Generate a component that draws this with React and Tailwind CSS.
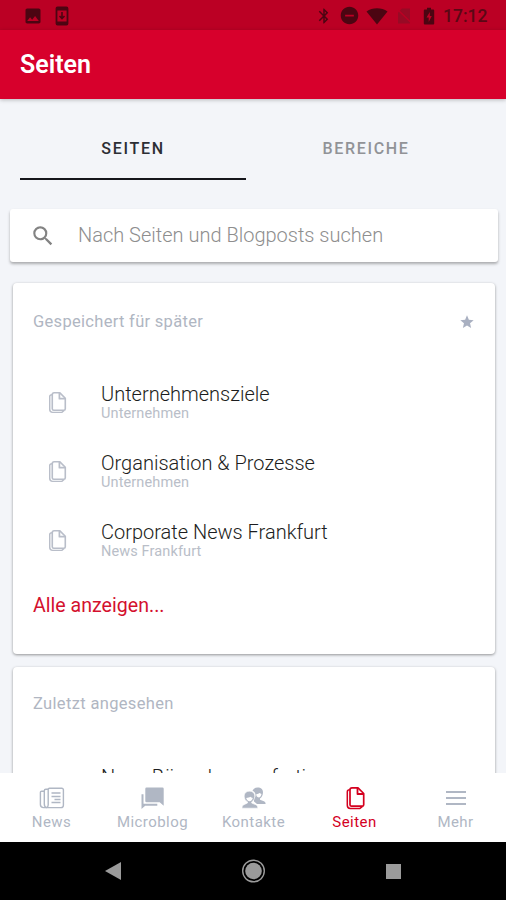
import React, { useState } from 'react';
import { MdBluetooth, MdRemoveCircle, MdImage, MdSearch, MdStar } from 'react-icons/md';

const savedPages = [
  { title: 'Unternehmensziele', space: 'Unternehmen' },
  { title: 'Organisation & Prozesse', space: 'Unternehmen' },
  { title: 'Corporate News Frankfurt', space: 'News Frankfurt' },
];

const PagesIcon = ({ className }) => (
  <svg viewBox="0 0 20 24" className={className} fill="none" stroke="currentColor" strokeLinejoin="round">
    <path d="M6.500 1.800h6l5.700 5.700v11.200a1.500 1.500 0 0 1-1.500 1.500H6a1.500 1.500 0 0 1-1.500-1.500V3.800a2 2 0 0 1 2-2z" strokeWidth="1.700" />
    <path d="M12 2v6h6" strokeWidth="1.800" />
    <path d="M4.300 3.800c-1.500 0-2.500.8-2.500 2v13.400c0 2 1 3.200 3 3.200h9.700l2.500-2" strokeWidth="1.500" />
  </svg>
);

const NewsIcon = () => (
  <svg viewBox="0 0 26 22" className="w-[26px] h-[22px]" fill="none" stroke="currentColor" strokeWidth="1.400">
    <path d="M10.500 1.200h12.300a1.600 1.600 0 0 1 1.600 1.600v15.400a2.400 2.400 0 0 1-2.400 2.400H7.500c1.200-.5 1.700-1.300 1.700-2.600V2.500c0-.8.500-1.300 1.300-1.300z" />
    <path d="M9 2.300H6.800c-1 0-1.500.5-1.500 1.500V17c0 2 .8 3.200 2.200 3.600" />
    <path d="M5.300 4.200H2.800c-.9 0-1.400.5-1.400 1.400v11.900c0 2 1.300 3.100 3.200 3.100H8" />
    <path d="M12.500 6h9M12.500 9.500h9M15.500 12.500h6M12.500 15.500h9" />
  </svg>
);

const ChatIcon = () => (
  <svg viewBox="0 0 24 22" className="w-6 h-[22px]" fill="currentColor">
    <path d="M5.500.5h16a1.200 1.200 0 0 1 1.200 1.200v17l-4-3.400H5.500a1.200 1.200 0 0 1-1.200-1.200V1.700A1.200 1.200 0 0 1 5.500.5z" />
    <path d="M.5 7.200h2v9.500h13.800v2H4.200L.5 22z" />
  </svg>
);

const ContactsIcon = () => (
  <svg viewBox="0 0 24 22" className="w-6 h-[22px]" fill="currentColor">
    {/* person at the back */}
    <path d="M10.500 3.800C11.500 1.700 13.200.6 15.700.6c3.300 0 5.300 1.900 5.300 4.700 0 3-1.300 5.200-3 6.100v1.300l3.900 1.500c1.200.5 1.700 1.400 1.700 2.800H15l-3-2.500v-3c1-1 1.500-2.100 1.500-3.500 0-1.900-1-3.400-3-4.200z" />
    <path d="M14.200 7.300c1.600-.2 2.800-.7 3.400-1.200.5.500 1.200.8 1.900.9-.3 1.900-1.400 3.400-2.700 3.400-.9 0-1.700-.5-2.300-1.400z" fill="white" />
    {/* person in front */}
    <path d="M2.200 9.200c0-3 1.900-5 5.300-5s5.300 2 5.300 5c0 2.600-1.400 4.700-3.100 5.700v1.200l4.100 1.600c1.400.6 2 1.600 2 3.500H0c0-1.900.5-2.900 1.900-3.500L5.500 16v-1.200c-1.900-1-3.300-3-3.300-5.600z" stroke="white" strokeWidth=".6" />
    <path d="M4.200 10.900c1.800-.1 3.300-.5 4.100-1.200.6.600 1.500 1 2.500 1.200-.4 1.900-1.700 3.300-3.200 3.300-1.600 0-3-1.400-3.400-3.300z" fill="white" />
  </svg>
);

const MenuIcon = () => (
  <svg viewBox="0 0 22 22" className="w-[22px] h-[22px]" stroke="currentColor" strokeWidth="2">
    <path d="M1 5h20M1 11h20M1 17h20" />
  </svg>
);

const navItems = [
  { label: 'News', icon: <NewsIcon /> },
  { label: 'Microblog', icon: <ChatIcon /> },
  { label: 'Kontakte', icon: <ContactsIcon /> },
  { label: 'Seiten', icon: <PagesIcon className="w-[21px] h-6" /> },
  { label: 'Mehr', icon: <MenuIcon /> },
];

const StatusBar = () => (
  <div className="h-[30px] shrink-0 bg-[#bb0024] text-[#4c0512] flex items-center justify-between pl-[23px] pr-[18px] pt-px">
    <div className="flex items-center gap-[11px]">
      <MdImage className="w-5 h-5" />
      <svg viewBox="0 0 16 20" className="w-4 h-5" fill="none" stroke="currentColor">
        <rect x="2.5" y="1.5" width="11" height="17" rx="1" strokeWidth="1.8" />
        <path d="M2 3h12M2 17h12" strokeWidth="3" />
        <path d="M8 6v6M5.5 10L8 12.5l2.5-2.5" strokeWidth="1.6" />
      </svg>
    </div>
    <div className="flex items-center">
      <MdBluetooth className="w-[18px] h-5" />
      <MdRemoveCircle className="w-[21px] h-[21px] ml-[6px]" />
      <svg viewBox="0 0 22 18" className="w-[22px] h-[18px] ml-[6px]" fill="currentColor">
        <path d="M.5 4.500C6.500.2 15.500.2 21.500 4.500L11 17.500z" />
      </svg>
      <svg viewBox="0 0 14 16" className="w-[14px] h-4 ml-[9px] text-[#980a25]">
        <path d="M5 .5h8v15H1v-11z" fill="currentColor" />
        <path d="M1 2l12.500 12" stroke="#bb0024" strokeWidth="1.500" />
      </svg>
      <svg viewBox="0 0 12 18" className="w-3 h-[18px] ml-[12px]">
        <path d="M4 .8h4v1.700h2.200a1 1 0 0 1 1 1v13a1 1 0 0 1-1 1H1.800a1 1 0 0 1-1-1v-13a1 1 0 0 1 1-1H4z" fill="currentColor" />
        <path d="M6.800 5L3.500 10.500h2.200V15L8.800 9H6.800z" fill="#bb0024" />
      </svg>
      <span className="ml-[8px] mt-[2px] w-[45px] text-[17.5px] leading-none font-medium whitespace-nowrap text-[#5a0815]">17:12</span>
    </div>
  </div>
);

const App = () => {
  const [activeTab, setActiveTab] = useState('SEITEN');
  const [activeNav, setActiveNav] = useState('Seiten');

  return (
    <div className="w-full h-screen flex flex-col overflow-hidden bg-[#f3f5f9] font-[Roboto,sans-serif]">
      <StatusBar />

      {/* Header */}
      <header className="h-[69px] shrink-0 bg-[#d7002c] flex items-center px-5 shadow-[0_1px_4px_rgba(0,0,0,0.25)]">
        <h1 className="text-white text-[25px] leading-none font-semibold">Seiten</h1>
      </header>

      {/* Tabs */}
      <div className="flex pl-5 h-[81px] shrink-0">
        {['SEITEN', 'BEREICHE'].map((tab) => (
          <button
            key={tab}
            type="button"
            onClick={() => setActiveTab(tab)}
            className={`w-[226px] shrink-0 border-b-2 pt-[21px] text-base font-medium tracking-[1.7px] ${
              activeTab === tab ? 'border-[#15161b] text-[#2c2e34]' : 'border-transparent text-[#919397] ml-[7px]'
            }`}
          >
            {tab}
          </button>
        ))}
      </div>

      <main className="flex-1 min-h-0 overflow-hidden pt-[29px]">
        {/* Search */}
        <div className="mr-2 ml-[10px] h-[53px] bg-white rounded-[3px] flex items-center pl-5 shadow-[0_2px_3px_rgba(0,0,0,0.3)]">
          <MdSearch className="w-[26px] h-[26px] text-[#838383]" />
          <span className="ml-[22px] mb-px text-[20px] leading-6 font-light text-[#8e8e8e]">Nach Seiten und Blogposts suchen</span>
        </div>

        {/* Saved pages */}
        <section className="mt-[21px] mr-[11px] ml-[13px] h-[371px] bg-white rounded-[4px] px-5 shadow-[0_1px_3px_rgba(0,0,0,0.4)]">
          <div className="h-[77px] flex items-center justify-between">
            <h2 className="pt-px text-[16.5px] tracking-[0.3px] text-[#b0b6c2]">Gespeichert für später</h2>
            <MdStar className="w-4 h-4 text-[#a9b0c1]" />
          </div>
          <ul className="pt-[9px]">
            {savedPages.map((page) => (
              <li key={page.title} className="h-[69px] flex items-center">
                <PagesIcon className="w-[19px] h-[23px] ml-[15px] mb-[2px] text-[#b9bec9]" />
                <div className="ml-[34px] mb-px">
                  <div className="text-[20px] leading-[22px] font-light text-[#1c1d20]">{page.title}</div>
                  <div className="text-[14.5px] leading-[18px] tracking-[0.12px] text-[#b9bec8]">{page.space}</div>
                </div>
              </li>
            ))}
          </ul>
          <button type="button" className="mt-[18px] text-[19.6px] leading-6 text-[#d4102e]">Alle anzeigen...</button>
        </section>

        {/* Recently viewed */}
        <section className="mt-[13px] mr-[11px] ml-[13px] h-[371px] bg-white rounded-[4px] px-5 shadow-[0_1px_3px_rgba(0,0,0,0.4)]">
          <div className="h-[74px] flex items-center">
            <h2 className="text-[16.5px] tracking-[0.34px] text-[#b0b6c2]">Zuletzt angesehen</h2>
          </div>
          <div className="mt-[25px] ml-[68px] text-[20px] leading-[22px] font-light text-[#1c1d20]">Neue Büros bezugsfertig</div>
        </section>
      </main>

      {/* Bottom navigation */}
      <nav className="relative h-[69px] shrink-0 bg-white grid grid-cols-5 pl-px">
        {navItems.map((item) => (
          <button
            key={item.label}
            type="button"
            onClick={() => setActiveNav(item.label)}
            className={`flex flex-col items-center pt-[13px] ${
              activeNav === item.label ? 'text-[#d4001f]' : 'text-[#b0b7c4]'
            }`}
          >
            <div className="h-6 flex items-center pl-px">{item.icon}</div>
            <span className="mt-[2px] text-[15px] leading-5 tracking-[0.45px]">{item.label}</span>
          </button>
        ))}
      </nav>

      {/* System navigation */}
      <div className="h-[58px] shrink-0 bg-black grid grid-cols-[1fr_54px_1fr] items-center text-[#9b9b9b]">
        <svg viewBox="0 0 16 18" className="w-4 h-[18px] justify-self-end mr-[105px]" fill="currentColor">
          <path d="M0 9L16 0v18z" />
        </svg>
        <svg viewBox="0 0 24 24" className="w-6 h-6 justify-self-center" fill="none" stroke="currentColor">
          <circle cx="12.5" cy="12" r="10.800" strokeWidth="1.400" />
          <circle cx="12.5" cy="12" r="8.300" fill="currentColor" stroke="none" />
        </svg>
        <div className="w-[15px] h-[15px] ml-[106px] bg-[#9b9b9b]" />
      </div>
    </div>
  );
};

export default App;
